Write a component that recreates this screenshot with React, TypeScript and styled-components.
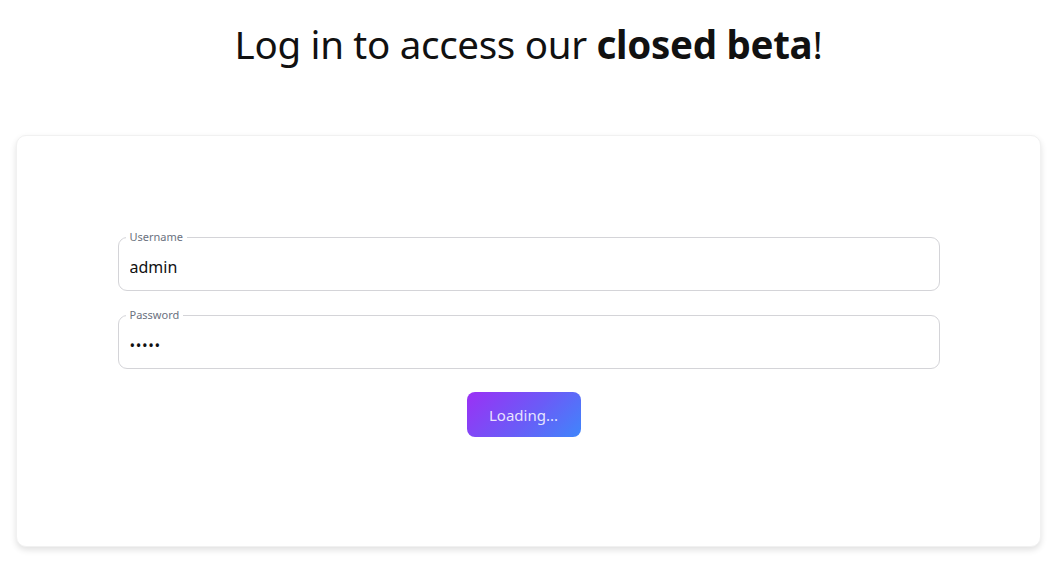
import styled, { createGlobalStyle } from "styled-components"

const Global = createGlobalStyle`
  body {
    margin: 0;
    background: #ffffff;
    font-family: "Noto Sans", "Open Sans", sans-serif;
    color: #111111;
  }
`

const Page = styled.div`
  display: flex;
  flex-direction: column;
  align-items: center;
  padding: 19px 11px 15px 16px;
`

const Title = styled.h1`
  margin: 0;
  height: 116px;
  font-size: 38.5px;
  font-weight: 400;
  letter-spacing: -0.3px;
  line-height: 50px;
  color: #111;
  b {
    font-weight: 700;
  }
`

const Card = styled.div`
  align-self: stretch;
  height: 412px;
  background: #fff;
  border-radius: 10px;
  border: 1px solid #f1f1f1;
  box-shadow: 0 3px 6px rgba(0, 0, 0, 0.12);
  display: flex;
  justify-content: center;
  align-items: flex-start;
  padding-top: 94px;
  box-sizing: border-box;
`

const Form = styled.form`
  width: 822px;
  display: flex;
  flex-direction: column;
  align-items: center;
  gap: 17px;
`

const Field = styled.fieldset`
  width: 100%;
  box-sizing: border-box;
  margin: 0;
  height: 61px;
  border: 1px solid #d4d4d8;
  border-radius: 9px;
  padding: 0 11px;
  legend {
    font-size: 11px;
    color: #6b7280;
    padding: 0 4px;
    margin-left: -4px;
    line-height: 14px;
  }
`

const Input = styled.input`
  border: none;
  outline: none;
  background: transparent;
  width: 100%;
  font-family: inherit;
  font-size: 16px;
  color: #111;
  padding: 0;
  margin-top: 11px;
  height: 24px;
  &[type="password"] {
    font-size: 15px;
    letter-spacing: 0.6px;
  }
`

const Button = styled.button`
  margin: 6px 10px 0 0;
  width: 114px;
  height: 45px;
  border: none;
  border-radius: 8px;
  background: linear-gradient(135deg, #9b30f5 0%, #6a5cf7 55%, #3f86fb 100%);
  color: rgba(255, 255, 255, 0.85);
  font-family: inherit;
  font-size: 15px;
`

export default function App() {
  return (
    <>
      <Global />
      <Page>
        <Title>
          Log in to access our <b>closed beta</b>!
        </Title>
        <Card>
          <Form onSubmit={(e) => e.preventDefault()}>
            <Field>
              <legend>Username</legend>
              <Input type="text" defaultValue="admin" />
            </Field>
            <Field>
              <legend>Password</legend>
              <Input type="password" defaultValue="admin" />
            </Field>
            <Button type="button">Loading...</Button>
          </Form>
        </Card>
      </Page>
    </>
  )
}
